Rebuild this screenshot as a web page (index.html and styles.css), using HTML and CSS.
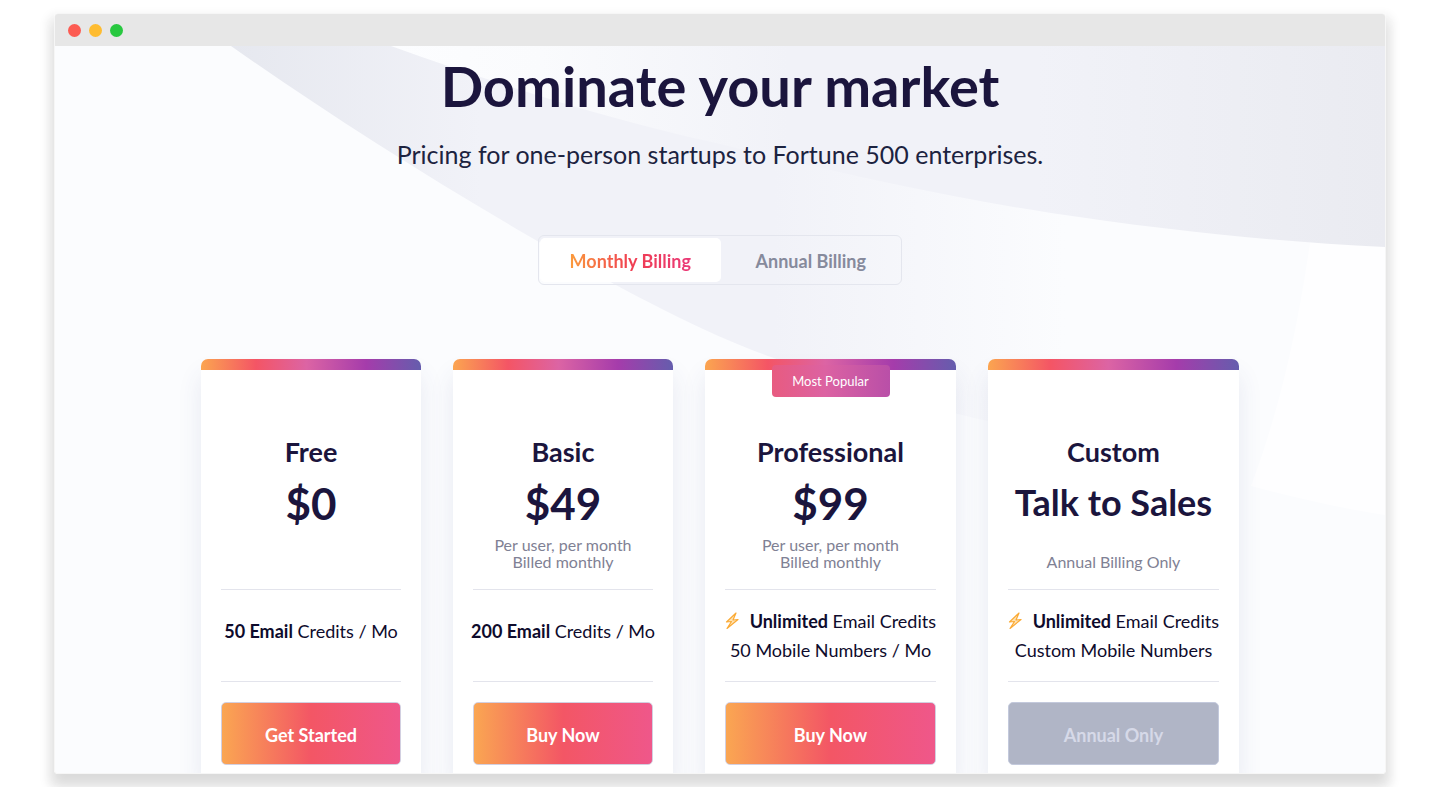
FILE: index.html
```html
<!DOCTYPE html>
<html lang="en">
<head>
    <meta charset="UTF-8">
    <meta name="viewport" content="width=device-width, initial-scale=1.0">
    <title>Pricing</title>
    <link rel="stylesheet" href="styles.css">
</head>
<body>
<div class="window">
    <!-- Browser bar -->
    <div class="window-bar">
        <span class="dot dot-red"></span>
        <span class="dot dot-yellow"></span>
        <span class="dot dot-green"></span>
    </div>

    <main class="page">
        <!-- Background curves -->
        <svg class="page-bg" viewBox="0 0 1330 727" preserveAspectRatio="none" aria-hidden="true">
            <defs>
                <linearGradient id="band" gradientUnits="userSpaceOnUse" x1="176" y1="0" x2="1010" y2="0">
                    <stop offset="0" stop-color="#e6e8ef"/>
                    <stop offset="0.3" stop-color="#f1f2f8"/>
                    <stop offset="0.65" stop-color="#f1f2f8"/>
                    <stop offset="1" stop-color="#fbfcfe"/>
                </linearGradient>
                <linearGradient id="top" gradientUnits="userSpaceOnUse" x1="336" y1="0" x2="1330" y2="0">
                    <stop offset="0" stop-color="#fcfdff"/>
                    <stop offset="0.15" stop-color="#fafbfd"/>
                    <stop offset="0.4" stop-color="#f1f2f8"/>
                    <stop offset="0.65" stop-color="#f1f2f8"/>
                    <stop offset="1" stop-color="#eaebf1"/>
                </linearGradient>
            </defs>
            <path fill="url(#band)" d="M176 0C270 66 370 130 484 196C560 240 650 288 716 311C830 352 920 375 1010 390V0Z"/>
            <path fill="#fefeff" d="M1256 190C1246 260 1230 350 1196 440C1240 452 1290 463 1330 469V190Z"/>
            <path fill="url(#top)" d="M336 0C450 41 560 75 661 97C780 126 880 149 996 167C1110 184 1220 196 1330 201V0Z"/>
        </svg>

        <header class="hero">
            <h1>Dominate your market</h1>
            <p>Pricing for one-person startups to Fortune 500 enterprises.</p>
        </header>

        <div class="billing">
            <button type="button" class="billing-tab active" aria-pressed="true"><span>Monthly Billing</span></button>
            <button type="button" class="billing-tab" aria-pressed="false"><span>Annual Billing</span></button>
        </div>

        <!-- Plans -->
        <div class="plans">
            <section class="plan">
                <h2>Free</h2>
                <div class="price">$0</div>
                <p class="terms"></p>
                <div class="features features-single">
                    <p><strong>50 Email</strong> Credits / Mo</p>
                </div>
                <button type="button" class="plan-btn">Get Started</button>
            </section>

            <section class="plan">
                <h2>Basic</h2>
                <div class="price">$49</div>
                <p class="terms">Per user, per month<br>Billed monthly</p>
                <div class="features features-single">
                    <p><strong>200 Email</strong> Credits / Mo</p>
                </div>
                <button type="button" class="plan-btn">Buy Now</button>
            </section>

            <section class="plan">
                <span class="badge">Most Popular</span>
                <h2>Professional</h2>
                <div class="price">$99</div>
                <p class="terms">Per user, per month<br>Billed monthly</p>
                <div class="features">
                    <p class="with-icon">
                        <svg class="bolt" viewBox="0 0 14 18" aria-hidden="true"><path d="M11 1L1.5 10L6.5 9.5L2 16.5L13 7.5L8 8Z"/></svg>
                        <span><strong>Unlimited</strong> Email Credits</span>
                    </p>
                    <p>50 Mobile Numbers / Mo</p>
                </div>
                <button type="button" class="plan-btn">Buy Now</button>
            </section>

            <section class="plan">
                <h2>Custom</h2>
                <div class="price price-text">Talk to Sales</div>
                <p class="terms">Annual Billing Only</p>
                <div class="features">
                    <p class="with-icon">
                        <svg class="bolt" viewBox="0 0 14 18" aria-hidden="true"><path d="M11 1L1.5 10L6.5 9.5L2 16.5L13 7.5L8 8Z"/></svg>
                        <span><strong>Unlimited</strong> Email Credits</span>
                    </p>
                    <p>Custom Mobile Numbers</p>
                </div>
                <button type="button" class="plan-btn" disabled>Annual Only</button>
            </section>
        </div>
    </main>
</div>
</body>
</html>
```
FILE: styles.css
```css
* {
    box-sizing: border-box;
}

body {
    margin: 0;
    padding: 13px 54px;
    background: #fff;
    color: #1b153d;
    font-family: Lato, "Liberation Sans", sans-serif;
    overflow: hidden;
}

h1, h2, p {
    margin: 0;
}

button {
    font-family: inherit;
    cursor: pointer;
}

.window {
    border: 1px solid #f6f6f6;
    border-radius: 4px;
    box-shadow: 0 10px 12px rgba(0, 0, 0, 0.1), 0 8px 8px 8px rgba(0, 0, 0, 0.05);
}

.window-bar {
    display: flex;
    align-items: center;
    gap: 8px;
    height: 32px;
    padding: 1px 13px 0;
    background: #e7e7e7;
    border-radius: 3px 3px 0 0;
}

.dot {
    width: 13px;
    height: 13px;
    border-radius: 50%;
}

.dot-red {
    background: #fc5b52;
}

.dot-yellow {
    background: #febc30;
}

.dot-green {
    background: #28c840;
}

.page {
    position: relative;
    z-index: 0;
    padding: 6px 24px 0;
    background: #fbfcfe;
    border-radius: 0 0 3px 3px;
    overflow: hidden;
}

.page-bg {
    position: absolute;
    top: 0;
    left: 0;
    width: 100%;
    height: 100%;
    z-index: -1;
}

.hero {
    text-align: center;
}

.hero h1 {
    font-size: 56px;
    line-height: 68px;
    font-weight: 700;
}

.hero p {
    margin-top: 18px;
    font-size: 25px;
    line-height: 32px;
    color: #1c2340;
}

/* Monthly / annual switch */
.billing {
    display: flex;
    width: 364px;
    height: 50px;
    margin: 65px auto 74px;
    padding: 2px 0 2px 1px;
    border: 1px solid #e4e6ee;
    border-radius: 6px;
}

.billing-tab {
    flex: 1;
    padding: 2px 0 0;
    border: 0;
    border-radius: 5px;
    background: none;
    color: #868a9c;
    font-size: 18px;
    font-weight: 700;
}

.billing-tab.active {
    background: #fff;
}

.billing-tab.active span {
    background: linear-gradient(90deg, #fb9b3c, #f03e50 50%, #ea3a78);
    -webkit-background-clip: text;
    background-clip: text;
    color: transparent;
}

.plans {
    display: grid;
    grid-template-columns: minmax(0, 220fr) minmax(0, 220fr) minmax(0, 251fr) minmax(0, 251fr);
    gap: 32px;
    max-width: 1038px;
    margin: 0 auto;
}

.plan {
    position: relative;
    padding: 76px 20px 8px;
    background: #fff;
    border-radius: 7px 7px 0 0;
    box-shadow: 0 16px 24px rgba(60, 70, 130, 0.1);
    text-align: center;
}

.plan::before {
    content: "";
    position: absolute;
    top: 0;
    left: 0;
    right: 0;
    height: 11px;
    border-radius: 7px 7px 0 0;
    background: linear-gradient(90deg, #fba550, #f45565 25%, #dc64a4 48%, #a53cab 75%, #655dad);
}

.badge {
    position: absolute;
    top: 6px;
    left: 50%;
    width: 118px;
    transform: translateX(-50%);
    border-radius: 4px;
    background: linear-gradient(90deg, #e85b80, #dc62a2 45%, #b94fa8);
    color: #fff;
    font-size: 13px;
    line-height: 32px;
}

.plan h2 {
    font-size: 27px;
    line-height: 34px;
    font-weight: 700;
}

.price {
    margin-top: 7px;
    font-size: 44px;
    line-height: 54px;
    font-weight: 700;
}

.price-text {
    font-size: 36px;
    line-height: 52px;
    padding-bottom: 2px;
    white-space: nowrap;
}

.terms {
    display: flex;
    flex-direction: column;
    justify-content: flex-end;
    height: 59px;
    padding-bottom: 19px;
    color: #7f8194;
    font-size: 16px;
    line-height: 17px;
}

.features {
    display: flex;
    flex-direction: column;
    justify-content: center;
    height: 93px;
    margin-bottom: 20px;
    border-top: 1px solid #e3e4ec;
    border-bottom: 1px solid #e3e4ec;
    color: #0e0b2c;
    font-size: 18px;
    line-height: 29px;
    white-space: nowrap;
}

.features-single {
    align-items: center;
    padding-bottom: 8px;
}

.with-icon {
    display: flex;
    align-items: center;
    justify-content: space-between;
}

.bolt {
    width: 14px;
    height: 18px;
    fill: #fee3b4;
    stroke: #fbaa35;
    stroke-width: 1.2;
    stroke-linejoin: round;
}

.plan-btn {
    display: block;
    width: 100%;
    height: 63px;
    padding: 2px 0 0;
    border: 1px solid #d2cfe0;
    border-radius: 5px;
    background: linear-gradient(90deg, #faa652, #f35665 50%, #ef578a);
    color: #fff;
    font-size: 18px;
    font-weight: 700;
}

.plan-btn:disabled {
    border-color: #c3c9dc;
    background: #b0b5c6;
    color: #d6d9e8;
    cursor: default;
}
```
